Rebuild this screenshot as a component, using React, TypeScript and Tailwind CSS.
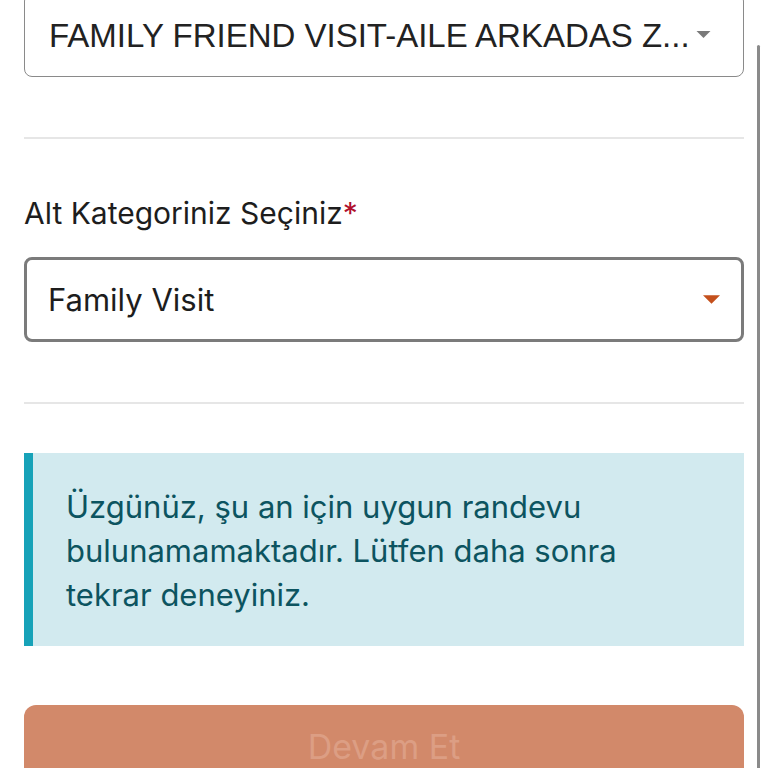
import { useState } from "react";

function Caret({ className }: { className: string }) {
  return (
    <svg viewBox="0 0 10 5" className={className} aria-hidden="true">
      <path d="M0 0h10L5 5z" fill="currentColor" />
    </svg>
  );
}

export default function App() {
  // native select shows the long category name clipped
  const [category] = useState("FAMILY FRIEND VISIT-AILE ARKADAS Z...");
  const [sub] = useState("Family Visit");

  return (
    <div className="relative h-[768px] overflow-hidden bg-white font-['Inter',sans-serif] text-[#1d1d1d]">
      <div className="-mt-[7px] px-6">
        {/* Category select */}
        <div className="flex h-[84px] items-center gap-[5px] overflow-hidden rounded-[8px] border border-[#8a8a8a] pl-6 pr-6">
          <span className="whitespace-nowrap font-['Liberation_Sans',Arial,sans-serif] text-[33px] leading-none text-[#222]">
            {category}
          </span>
          <Caret className="-mt-[2px] h-[7px] w-[17px] shrink-0 text-[#7a7a7a]" />
        </div>

        <hr className="mt-[60px] border-t-2 border-[#e6e6e6]" />

        <label className="mt-[56px] block text-[30px] leading-[36px]">
          Alt Kategoriniz Seçiniz<span className="text-[#b0102c]">*</span>
        </label>

        {/* Sub category select */}
        <div className="mt-[26px] flex h-[85px] items-center rounded-[8px] border-[3px] border-[#7b7b7b] pl-[21px] pr-[21px]">
          <span className="flex-1 text-[31px] leading-none">{sub}</span>
          <Caret className="h-[9px] w-[17px] text-[#c4501c]" />
        </div>

        <hr className="mt-[60px] border-t-2 border-[#e6e6e6]" />

        {/* Info alert */}
        <div className="mt-[49px] flex h-[193px] bg-[#d2eaef]">
          <div className="w-[9px] shrink-0 bg-[#17a2b8]" />
          <p className="pl-[33px] pr-[60px] pt-[32px] text-[31px] leading-[44px] text-[#0c5460]">
            Üzgünüz, şu an için uygun randevu bulunamamaktadır. Lütfen daha sonra tekrar deneyiniz.
          </p>
        </div>

        <button
          type="button"
          disabled
          className="mt-[59px] flex h-[90px] w-full items-center justify-center rounded-[12px] bg-[#d2896a] pb-2 text-[34px] text-[#dc9e84]"
        >
          Devam Et
        </button>
      </div>

      {/* scroll indicator */}
      <div className="absolute right-[8px] top-[45px] h-[740px] w-[3px] rounded-full bg-[#8a8a8a]" />
    </div>
  );
}
